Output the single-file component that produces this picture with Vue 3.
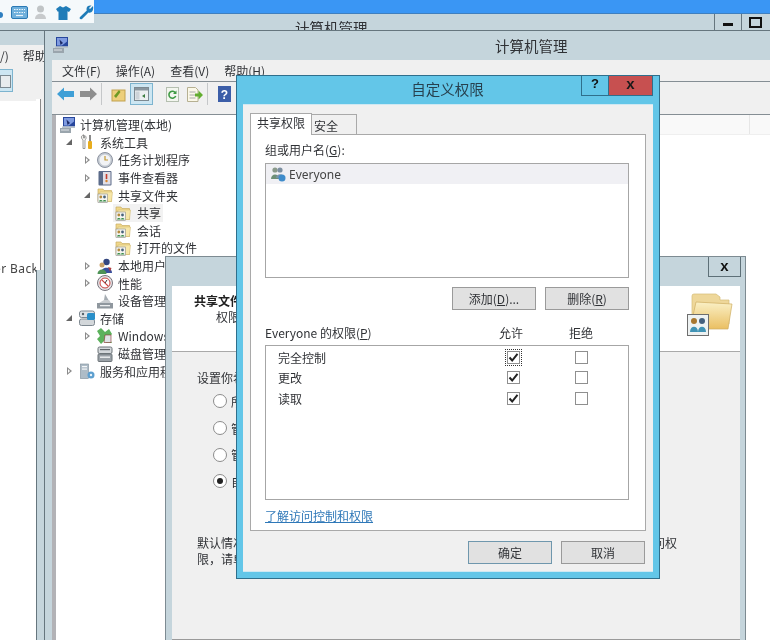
<script setup>
const icons = {
  computer: '<rect x="0" y="11" width="11" height="5" fill="#9aa5ad"/><rect x="1" y="12.500" width="8" height="1" fill="#dfe4e7"/><path d="M3 0h12v9.500H3z" fill="#27469c"/><path d="M4 1h10v3.500L9 8.500H4z" fill="#7f9be0"/><path d="M6.500 2.500l3.500 3.500-2.500 2z" fill="#1d2b66"/><path d="M2 9.500h13V11H2z" fill="#b9c2c9"/>',
  tools: '<path d="M5 1c-2 0-3 1.500-2.500 3 .3 1 1 1.500 1.500 2v8.500h2V6c.8-.7 1.400-1.500 1-3-.2-.8-.8-1.500-1.500-1.500V4H4.500V1z" fill="#f3f3f0" stroke="#777" stroke-width=".7"/><rect x="10" y="1" width="2" height="6" fill="#8a8a8a"/><rect x="9" y="7" width="4" height="8" rx="1" fill="#e8ad1e"/>',
  clock: '<circle cx="8" cy="8" r="7.500" fill="#c5cbd3" stroke="#8c93a0"/><circle cx="8" cy="8" r="5.500" fill="#f2f3f5"/><path d="M8 4v4h3" fill="none" stroke="#c19a35" stroke-width="1.200"/>',
  event: '<rect x="1.500" y="1" width="13" height="14.500" rx="1" fill="#5b6b8a"/><rect x="6" y="2" width="7.500" height="12.500" fill="#e1dfe6"/><path d="M9.500 4v5" stroke="#c43c2d" stroke-width="1.600"/><circle cx="9.500" cy="11" r="1.200" fill="#d9852b"/>',
  share: '<path d="M1 2h5l1 1.500h7.500v11H1z" fill="#f0d78a" stroke="#c9ad62" stroke-width=".7"/><path d="M3 5h12.500l-1 9.500H1.500z" fill="#f7e7a8" stroke="#cdb56d" stroke-width=".5"/><rect x="1" y="7" width="9.500" height="8.500" fill="#f5f5f0" stroke="#8c8c88" stroke-width=".6"/><circle cx="3.800" cy="10" r="1.400" fill="#b58a3c"/><circle cx="7.500" cy="10" r="1.400" fill="#47627a"/><path d="M2 14.500c0-2 3.600-2 3.600 0zM5.800 14.500c0-2 3.600-2 3.600 0z" fill="#3c8e4d"/>',
  users: '<circle cx="9.500" cy="4" r="3.200" fill="#34467f"/><path d="M4 15c0-7 11-7 11 0z" fill="#39509d"/><circle cx="5" cy="7" r="2.500" fill="#c9a068"/><path d="M.500 16c0-6 9-6 9 0z" fill="#4e9356"/><path d="M11 9l3.500 1-1.500 3.500z" fill="#b33d3d"/>',
  perf: '<circle cx="8" cy="8" r="7.500" fill="#e8e3e6" stroke="#77757d"/><circle cx="8" cy="8" r="5" fill="#fff" stroke="#c7413c"/><path d="M4.800 4.800l6.400 6.400" stroke="#c7413c" stroke-width="1.200"/><path d="M8 8l2-3" stroke="#333"/>',
  device: '<path d="M2 10l5-3h5l2 3z" fill="#c8ccd0"/><path d="M8 1l3.500 6H7z" fill="#a6adb3"/><rect x="0" y="10" width="16" height="5.500" fill="#8f979e"/><rect x="3" y="12" width="10" height="1.300" fill="#eceef0"/>',
  storage: '<rect x=".5" y="1" width="15" height="6.500" rx="2" fill="#dfe3e6" stroke="#7e8890"/><rect x=".5" y="9" width="15" height="6.500" rx="2" fill="#d3d7da" stroke="#7e8890"/><rect x="8" y="3" width="8" height="7" rx="1.500" fill="#2a8fc9"/><circle cx="4" cy="4" r="1.200" fill="#56626a"/>',
  backup: '<path d="M4 0l4 4 4-3 3 5-3 4 3 5H9l-2-2-3 3-4-5 3-3-3-5z" fill="#5cb25c"/><path d="M8 7h6v7.500H7z" fill="#dfe3e5" stroke="#8a2f2f" stroke-width=".6"/>',
  disk: '<rect x="1" y="1" width="14" height="6.500" rx="1.500" fill="#d4d8db" stroke="#6d7479"/><rect x="1" y="8" width="14" height="7.500" rx="1" fill="#9aa1a7" stroke="#6d7479"/><rect x="3" y="10.500" width="10" height="1.400" fill="#eef0f1"/><rect x="3" y="3" width="10" height="1.200" fill="#5d6468"/>',
  services: '<rect x="1.500" y="1" width="8" height="14.500" fill="#aebcc7" stroke="#7b8b97" stroke-width=".6"/><rect x="3" y="3" width="5" height="1.200" fill="#f3f6f8"/><rect x="3" y="5.500" width="5" height="1.200" fill="#f3f6f8"/><circle cx="12" cy="12" r="3.500" fill="#5d9fcf"/><circle cx="12" cy="12" r="1.200" fill="#eaf3f9"/>'
}

const tree = [
  { label: '计算机管理(本地)', icon: 'computer', level: 0 },
  { label: '系统工具', icon: 'tools', level: 1, arrow: 'open' },
  { label: '任务计划程序', icon: 'clock', level: 2, arrow: 'closed' },
  { label: '事件查看器', icon: 'event', level: 2, arrow: 'closed' },
  { label: '共享文件夹', icon: 'share', level: 2, arrow: 'open' },
  { label: '共享', icon: 'share', level: 3, selected: true },
  { label: '会话', icon: 'share', level: 3 },
  { label: '打开的文件', icon: 'share', level: 3 },
  { label: '本地用户和组', icon: 'users', level: 2, arrow: 'closed' },
  { label: '性能', icon: 'perf', level: 2, arrow: 'closed' },
  { label: '设备管理器', icon: 'device', level: 2 },
  { label: '存储', icon: 'storage', level: 1, arrow: 'open' },
  { label: 'Windows Server Backup', icon: 'backup', level: 2, arrow: 'closed' },
  { label: '磁盘管理', icon: 'disk', level: 2 },
  { label: '服务和应用程序', icon: 'services', level: 1, arrow: 'closed' }
]

const radios = [
  { label: '所有用户有完全访问权限', on: false },
  { label: '管理员有完全访问权限', on: false },
  { label: '管理员有完全访问权限', on: false },
  { label: '自定义权限', on: true }
]

const perms = [
  { label: '完全控制', focus: true },
  { label: '更改', focus: false },
  { label: '读取', focus: false }
]
</script>

<template>
  <div class="desk">
    <!-- rearmost window -->
    <section class="win back">
      <div class="back-top"></div>
      <div class="back-title">
        <span class="back-name">计算机管理</span>
        <span class="cap-btn"><i class="min"></i></span>
        <span class="cap-btn"><i class="rest"></i></span>
      </div>
      <div class="back-band"></div>
      <div class="back-menu"><span>/)</span><span class="back-help">帮助</span></div>
      <div class="back-tool"><span class="back-sel"><i></i></span></div>
      <div class="back-pane"><span class="back-text">er Back</span></div>
    </section>

    <div class="tray">
      <svg class="tray-i" width="4" height="14" viewBox="0 0 4 14"><circle cx="0" cy="9" r="3" fill="#2f7fc0"/></svg>
      <svg class="tray-i" width="17" height="13" viewBox="0 0 17 13"><rect x=".5" y=".5" width="16" height="12" rx="1.500" fill="#6fb0dc" stroke="#2b79b4"/><path d="M3 3.500h11M3 6.500h11" stroke="#eaf5fb" stroke-dasharray="1.500 1"/><path d="M5 9.500h7" stroke="#eaf5fb" stroke-width="1.200"/></svg>
      <svg class="tray-i" width="13" height="15" viewBox="0 0 13 15"><circle cx="6.500" cy="4" r="3.500" fill="#c0c4c6"/><path d="M1 14c0-7 11-7 11 0z" fill="#c7cacc"/></svg>
      <svg class="tray-i" width="15" height="14" viewBox="0 0 15 14"><path d="M4 0l3 1.500L10 0l5 3-2 3-1.500-.7V14h-9V5.300L2 6 0 3z" fill="#1f7cb8"/></svg>
      <svg class="tray-i" width="15" height="15" viewBox="0 0 15 15"><path d="M14 1l-3 3-1-1 2.500-2.500C10 0 7.500 1 7.500 4c0 .7.100 1 .3 1.500L1 12c-1 1 0 3 2 2l6.500-6.500C12 8.500 15 6 14 1z" fill="#1f7cb8"/></svg>
    </div>

    <!-- computer management window -->
    <section class="win main">
      <header class="main-title">
        <svg class="main-ico" width="16" height="16" viewBox="0 0 16 16" v-html="icons.computer"></svg>
        <span>计算机管理</span>
      </header>
      <nav class="menu">
        <span>文件(F)</span><span>操作(A)</span><span>查看(V)</span><span>帮助(H)</span>
      </nav>
      <div class="toolbar">
        <svg width="17" height="14" viewBox="0 0 17 14"><path d="M0 7l7-6.500V4h10v6H7v3.500z" fill="#3f9fd6"/></svg>
        <svg class="t-next" width="17" height="14" viewBox="0 0 17 14"><path d="M17 7l-7-6.500V4H0v6h10v3.500z" fill="#8e8e8e"/></svg>
        <i class="t-sep"></i>
        <svg class="t-up" width="15" height="15" viewBox="0 0 15 15"><rect x="1" y="3" width="13" height="11" fill="#edcf7c" stroke="#c1a14e"/><path d="M3 9l5-6 1.500 2L5 11z" fill="#6e9a24"/></svg>
        <span class="t-active"><svg width="15" height="14" viewBox="0 0 15 14"><rect x=".5" y=".5" width="14" height="13" fill="#eceff1" stroke="#7d8a92"/><rect x="1" y="1" width="13" height="2.500" fill="#8a97a0"/><rect x="1.500" y="4.500" width="4" height="8" fill="#ccd3d8"/><path d="M11 7l-3 2 3 2z" fill="#3c7d40"/></svg></span>
        <svg class="t-ref" width="13" height="15" viewBox="0 0 13 15"><rect x=".5" y=".5" width="12" height="14" fill="#f3f6ef" stroke="#b5bfb0"/><path d="M9.500 6a3.500 3.500 0 1 0 .2 3" fill="none" stroke="#3f9a44" stroke-width="1.600"/><path d="M10.500 3.500v3.500H7z" fill="#3f9a44"/></svg>
        <svg class="t-exp" width="16" height="15" viewBox="0 0 16 15"><path d="M.5.500h8l2.500 2.500v11.500H.5z" fill="#fbf8e8" stroke="#b6b092"/><path d="M2.500 5h6M2.500 8h6M2.500 11h6" stroke="#aaa"/><path d="M8 6.500h3.500V3.500L16 8l-4.500 4.500v-3H8z" fill="#62ad2f"/></svg>
        <i class="t-sep s2"></i>
        <svg class="t-help" width="13" height="16" viewBox="0 0 13 16"><rect width="13" height="16" fill="#3c5ea8"/><text x="6.500" y="12.500" text-anchor="middle" font-size="12" font-weight="700" font-family="Liberation Sans, sans-serif" fill="#fff">?</text></svg>
        <i class="t-sep s3"></i>
      </div>
      <div class="main-body">
        <i class="split"></i>
        <ul class="tree">
          <li v-for="n in tree" :key="n.label" class="node" :class="'lv' + n.level">
            <span class="arrow" :class="n.arrow"></span>
            <span class="node-in" :class="{ sel: n.selected }">
              <svg width="16" height="16" viewBox="0 0 16 16" v-html="icons[n.icon]"></svg>
              <span class="node-t">{{ n.label }}</span>
            </span>
          </li>
        </ul>
        <div class="cols"><i class="col"></i><i class="col"></i></div>
      </div>
    </section>

    <!-- share wizard window -->
    <section class="win wizard">
      <header class="wiz-title"><span class="wiz-x">x</span></header>
      <div class="wiz-head">
        <div>
          <b class="wiz-h1">共享文件夹的权限</b>
          <p class="wiz-h2">权限让你能够控制</p>
        </div>
        <svg class="wiz-folder" width="46" height="43" viewBox="0 0 46 43">
          <defs>
            <linearGradient id="fold" x1="0" y1="0" x2="0" y2="1">
              <stop offset="0" stop-color="#faf0c6"/>
              <stop offset="1" stop-color="#eabf62"/>
            </linearGradient>
          </defs>
          <path d="M5 3q0-2 2-2h22l4 3v3h9v24H5z" fill="#eed79a" stroke="#d5bb76" stroke-width=".7"/>
          <path d="M9 9l36 2-4 25H3z" fill="url(#fold)" stroke="#cfae62" stroke-width=".7"/>
          <rect x=".5" y="21.500" width="21" height="21" fill="#eef2f2" stroke="#6e6e6e"/>
          <circle cx="7" cy="28" r="3" fill="#a8772f"/><circle cx="15" cy="28" r="3" fill="#44607e"/>
          <path d="M3 39c0-7 8-7 8 0zM11 39c0-7 8-7 8 0z" fill="#4093b5"/>
        </svg>
      </div>
      <div class="wiz-body">
        <p class="wiz-q">设置你希望的文件夹权限</p>
        <label v-for="(r, i) in radios" :key="i" class="radio" :class="'r' + i">
          <i class="dot" :class="{ on: r.on }"></i><span>{{ r.label }}</span>
        </label>
        <p class="wiz-note">默认情况下，仅该文件夹的共享用户拥有读取权限。若要为其他用户授予更多不同的访问权<br>限，请单击“自定义”。</p>
      </div>
    </section>

    <!-- permissions dialog -->
    <section class="dlg">
      <header class="dlg-title">
        <span class="dlg-name">自定义权限</span>
        <span class="dlg-q">?</span>
        <span class="dlg-x">x</span>
      </header>
      <div class="dlg-in">
        <div class="tabs">
          <span class="tab on">共享权限</span>
          <span class="tab">安全</span>
        </div>
        <div class="panel">
          <p class="lbl">组或用户名(<u>G</u>):</p>
          <div class="list">
            <div class="row">
              <svg width="16" height="16" viewBox="0 0 16 16"><circle cx="5" cy="4" r="2.600" fill="#8a9a8a"/><circle cx="10" cy="4" r="2.600" fill="#7c8fa0"/><path d="M1 13c0-6 8-6 8 0z" fill="#6d8f76"/><path d="M6 12c0-5 8-5 8 0z" fill="#7a93a8"/><circle cx="12" cy="12" r="3.500" fill="#3f8ccb"/></svg>
              <span>Everyone</span>
            </div>
          </div>
          <div class="btns">
            <button class="btn">添加(<u>D</u>)...</button>
            <button class="btn">删除(<u>R</u>)</button>
          </div>
          <div class="perm-head">
            <span>Everyone 的权限(<u>P</u>)</span>
            <span class="ctr">允许</span>
            <span class="ctr">拒绝</span>
          </div>
          <div class="perm-box">
            <div v-for="p in perms" :key="p.label" class="perm-row">
              <span>{{ p.label }}</span>
              <span class="ctr"><i class="chk" :class="{ focus: p.focus }"><svg width="11" height="11" viewBox="0 0 11 11"><path d="M1.500 5.500l2.700 3L9.500 1.800" fill="none" stroke="#222" stroke-width="2"/></svg></i></span>
              <span class="ctr"><i class="chk"></i></span>
            </div>
          </div>
          <a class="link">了解访问控制和权限</a>
        </div>
        <div class="foot">
          <button class="btn wide def">确定</button>
          <button class="btn wide">取消</button>
        </div>
      </div>
    </section>
  </div>
</template>

<style scoped>
.desk {
  position: relative;
  width: 770px;
  height: 640px;
  overflow: hidden;
  background: #fff;
  font-family: "Noto Sans CJK SC", "Noto Sans", sans-serif;
  font-size: 12px;
  color: #303236;
  filter: blur(0.4px);
}
p, ul { margin: 0; padding: 0; }
i { display: block; font-style: normal; }
.win { position: absolute; }

/* back window */
.back { left: 0; top: 0; width: 770px; height: 640px; }
.back-top { height: 13px; background: #3a96f4; border-bottom: 1px solid #3f7fbe; }
.back-title {
  display: flex;
  height: 16px;
  background: #c5d5dc;
  border-bottom: 1px solid #66767e;
}
.back-name { margin: 0 auto 0 295px; line-height: 27px; font-size: 14.5px; height: 16px; overflow: hidden; }
.cap-btn { width: 26px; border-left: 1px solid #66767e; display: flex; align-items: center; justify-content: center; }
.cap-btn:last-child { margin-right: 2px; }
.min { width: 10px; height: 3px; background: #111; margin-top: 5px; }
.rest { width: 9px; height: 7px; border: 2px solid #111; }
.back-band { height: 14px; background: #c5d5dc; }
.back-menu {
  display: flex;
  height: 24px;
  background: #f0f0f0;
  line-height: 22px;
}
.back-help { margin-left: 14px; }
.back-tool { height: 32px; background: #f0f0f0; }
.back-sel {
  display: block;
  width: 12px;
  height: 21px;
  background: #cde6f2;
  border: 1px solid #7db4cf;
  border-left: 0;
}
.back-sel i { width: 9px; height: 11px; margin-top: 5px; background: #e8ecee; border: 1px solid #7d8a92; }
.back-pane {
  width: 36px;
  height: 541px;
  padding-top: 160px;
  box-sizing: border-box;
  background: #fff;
  overflow: hidden;
  white-space: nowrap;
  line-height: 16px;
  font-family: "Noto Sans", sans-serif;
  color: #444;
}
.back-text { margin-left: -6px; display: block; letter-spacing: .4px; }
.back::before {
  content: "";
  position: absolute;
  left: 36px;
  top: 99px;
  width: 8px;
  height: 171px;
  background: linear-gradient(90deg, #fff 4px, #8a8a8a 4px, #8a8a8a 5px, #f0f0f0 5px);
}
.back::after {
  content: "";
  position: absolute;
  left: 36px;
  top: 270px;
  width: 8px;
  height: 370px;
  box-sizing: border-box;
  background: #c5d5dc;
  border-left: 1px solid #66767e;
}

/* top-left tray */
.tray {
  position: absolute;
  left: 0;
  top: 0;
  width: 94px;
  height: 23px;
  background: #f5f9fb;
  display: flex;
  align-items: center;
  padding-top: 2px;
  box-sizing: border-box;
}
.tray-i:nth-child(2) { margin-left: 7px; }
.tray-i:nth-child(3) { margin-left: 6px; }
.tray-i:nth-child(4) { margin-left: 9px; }
.tray-i:nth-child(5) { margin-left: 8px; }

/* main window */
.main {
  left: 44px;
  top: 30px;
  width: 974px;
  height: 610px;
  box-sizing: border-box;
  border-left: 1px solid #66767e;
  border-top: 1px solid #66767e;
  background: #c5d5dc;
  padding-left: 7px;
  display: flex;
  flex-direction: column;
}
.main-title {
  height: 29px;
  flex: none;
  font-size: 14.5px;
  display: flex;
  align-items: center;
  padding-left: 443px;
  position: relative;
}
.main-ico { position: absolute; left: 1px; top: 6px; }
.menu {
  height: 22px;
  box-sizing: border-box;
  flex: none;
  background: #f0f0f0;
  border-bottom: 1px solid #858e94;
  display: flex;
  gap: 15px;
  padding-left: 10px;
  align-items: center;
}
.toolbar {
  height: 33px;
  flex: none;
  background: #f0f0f0;
  border-bottom: 1px solid #858e94;
  display: flex;
  align-items: center;
  padding-left: 5px;
  padding-bottom: 8px;
  box-sizing: border-box;
}
.t-next { margin-left: 6px; }
.t-sep { width: 1px; height: 22px; background: #c5c7c9; margin-left: 4px; }
.s2 { margin-left: 4px; }
.s3 { margin-left: 5px; }
.t-up { margin-left: 9px; }
.t-active {
  width: 23px;
  height: 22px;
  margin-left: 4px;
  box-sizing: border-box;
  background: #cde6f2;
  border: 1px solid #7db4cf;
  display: flex;
  align-items: center;
  justify-content: center;
}
.t-ref { margin-left: 13px; }
.t-exp { margin-left: 8px; }
.t-help { margin-left: 10px; }
.main-body { flex: 1; background: #fff; display: flex; align-items: flex-start; min-height: 0; }
.split { width: 4px; height: 100%; background: #b2b2b6; flex: none; }
.tree { list-style: none; margin-top: 1px; width: 190px; flex: none; }
.node { display: flex; align-items: center; height: 17.6px; white-space: nowrap; }
.lv0 { padding-left: 4px; }
.lv1 { padding-left: 9px; }
.lv2 { padding-left: 27px; }
.lv3 { padding-left: 59px; }
.arrow { width: 10px; flex: none; display: block; height: 10px; position: relative; margin-right: 4px; }
.lv0 .arrow, .lv3 .arrow { display: none; }
.arrow.closed::before {
  content: "";
  position: absolute;
  left: 2px;
  top: 1px;
  width: 0;
  height: 0;
  border-left: 5px solid #8b8b8b;
  border-top: 4px solid transparent;
  border-bottom: 4px solid transparent;
}
.arrow.closed::after {
  content: "";
  position: absolute;
  left: 3px;
  top: 3px;
  width: 0;
  height: 0;
  border-left: 2.500px solid #fff;
  border-top: 2px solid transparent;
  border-bottom: 2px solid transparent;
}
.arrow.open::before {
  content: "";
  position: absolute;
  left: 1px;
  top: 2px;
  width: 0;
  height: 0;
  border-bottom: 6px solid #666;
  border-left: 6px solid transparent;
}
.node-in { display: flex; align-items: center; gap: 5px; height: 100%; }
.lv0 .node-in { gap: 4px; }
.lv3 .node-in { gap: 6px; }
.sel { background: #f2f2f2; padding-right: 2px; margin-left: -2px; padding-left: 2px; }
.cols { flex: 1; height: 19px; display: flex; background: #f9f9f9; border-bottom: 1px solid #efefef; }
.col { width: 504px; flex: none; border-right: 1px solid #e6e6e6; box-sizing: border-box; }

/* wizard */
.wizard {
  left: 165px;
  top: 256px;
  width: 581px;
  height: 384px;
  box-sizing: border-box;
  background: #c5d5dc;
  border: 1px solid #7d8b92;
  border-bottom: 0;
  padding: 0 5px 0 6px;
  display: flex;
  flex-direction: column;
}
.wiz-title { height: 29px; flex: none; position: relative; }
.wiz-x {
  position: absolute;
  right: -1px;
  top: 0;
  width: 33px;
  height: 20px;
  box-sizing: border-box;
  border: 1px solid #5e7078;
  border-top: 0;
  text-align: center;
  font: 700 15px/17px "Liberation Sans", sans-serif;
  color: #111;
}
.wiz-head {
  height: 66px;
  flex: none;
  background: #fff;
  border-bottom: 1px solid #a9a9a9;
  box-sizing: border-box;
  padding: 6px 7px 0 22px;
  display: flex;
  justify-content: space-between;
}
.wiz-h1 { display: block; line-height: 18px; color: #222; }
.wiz-h2 { margin-left: 22px; line-height: 14px; }
.wiz-folder { margin-top: 1px; }
.wiz-body {
  flex: 1;
  background: #f0f0f0;
  border-bottom: 1px solid #9a9a9a;
  padding: 17px 0 0 25px;
  white-space: nowrap;
}
.wiz-q { line-height: 18px; }
.radio {
  display: flex;
  align-items: center;
  gap: 4px;
  padding-left: 16px;
  height: 26.700px;
}
.r0 { margin-top: 1px; }
.dot {
  width: 12px;
  height: 12px;
  flex: none;
  border: 1px solid #8c8c8c;
  border-radius: 50%;
  background: #fff;
  position: relative;
}
.dot.on::after {
  content: "";
  position: absolute;
  left: 3px;
  top: 3px;
  width: 6px;
  height: 6px;
  border-radius: 50%;
  background: #222;
}
.wiz-note { margin-top: 40px; line-height: 16px; }

/* dialog */
.dlg {
  position: absolute;
  left: 236px;
  top: 75px;
  width: 424px;
  height: 504px;
  box-sizing: border-box;
  background: #63c6e8;
  border: 1px solid #2f6f8c;
  padding: 0 6px 6px 6px;
  display: flex;
  flex-direction: column;
}
.dlg-title { height: 28px; flex: none; position: relative; text-align: center; }
.dlg-name { font-size: 14.5px; line-height: 25px; margin-left: -1px; color: #27414f; }
.dlg-q, .dlg-x {
  position: absolute;
  top: 0;
  height: 20px;
  box-sizing: border-box;
  text-align: center;
  font: 700 13px/15px "Liberation Sans", sans-serif;
  color: #111;
  border: 1px solid #2f6f8c;
  border-top: 0;
}
.dlg-q { left: 338px; width: 28px; }
.dlg-x { left: 365px; width: 45px; background: #c75050; font-size: 15px; color: #1a1a1a; }
.dlg-in {
  flex: 1;
  background: #f0f0f0;
  border: 1px solid #cfe8f2;
  border-width: 1px 0 1px;
  padding: 8px 7px 0;
  display: flex;
  flex-direction: column;
}
.tabs { display: flex; height: 21px; flex: none; align-items: flex-end; position: relative; z-index: 1; }
.tab {
  height: 20px;
  width: 45px;
  box-sizing: border-box;
  border: 1px solid #a9a9a9;
  border-left: 0;
  border-bottom: 0;
  background: #f0f0f0;
  padding-left: 2px;
  line-height: 21px;
}
.tab.on {
  width: 62px;
  height: 22px;
  padding-left: 0;
  text-align: center;
  border-left: 1px solid #a9a9a9;
  background: #fff;
  margin-bottom: -1px;
  line-height: 18px;
}
.panel {
  height: 397px;
  flex: none;
  box-sizing: border-box;
  background: #fff;
  border: 1px solid #a9a9a9;
  padding: 0 16px 0 14px;
}
.lbl { line-height: 16px; margin-top: 7px; }
.list {
  height: 115px;
  box-sizing: border-box;
  margin-top: 5px;
  border: 1px solid #a6a6a6;
}
.row {
  display: flex;
  align-items: center;
  gap: 3px;
  height: 20px;
  padding-left: 4px;
  background: #f0f0f4;
}
.row span { font-family: "Noto Sans", sans-serif; color: #444; }
.btns { display: flex; justify-content: flex-end; gap: 9px; margin-top: 9px; }
.btn {
  width: 84px;
  height: 23px;
  padding: 0;
  box-sizing: border-box;
  background: #e1e1e1;
  border: 1px solid #9a9a9a;
  font: inherit;
  color: inherit;
}
.def { border-color: #6f97ad; }
.perm-head, .perm-row {
  display: grid;
  grid-template-columns: 1fr 68px 68px;
  align-items: center;
}
.perm-head { margin-top: 12px; height: 20px; padding-right: 14px; }
.ctr { display: flex; justify-content: center; }
.perm-head .ctr:nth-child(2) { margin-left: -4px; }
.perm-box {
  height: 155px;
  box-sizing: border-box;
  margin-top: 3px;
  border: 1px solid #a6a6a6;
  padding: 1px 13px 0 12px;
}
.perm-row { height: 20.500px; }
.chk {
  width: 13px;
  height: 13px;
  box-sizing: border-box;
  border: 1px solid #8f8f8f;
  background: #fff;
  display: flex;
  align-items: center;
  justify-content: center;
}
.chk.focus { outline: 1px dotted #333; outline-offset: 1px; }
.link {
  display: block;
  margin-top: 8px;
  line-height: 16px;
  color: #2f78b8;
  text-decoration: underline;
  width: max-content;
}
.foot { display: flex; justify-content: flex-end; gap: 9px; margin-top: 10px; margin-right: 1px; }
</style>
